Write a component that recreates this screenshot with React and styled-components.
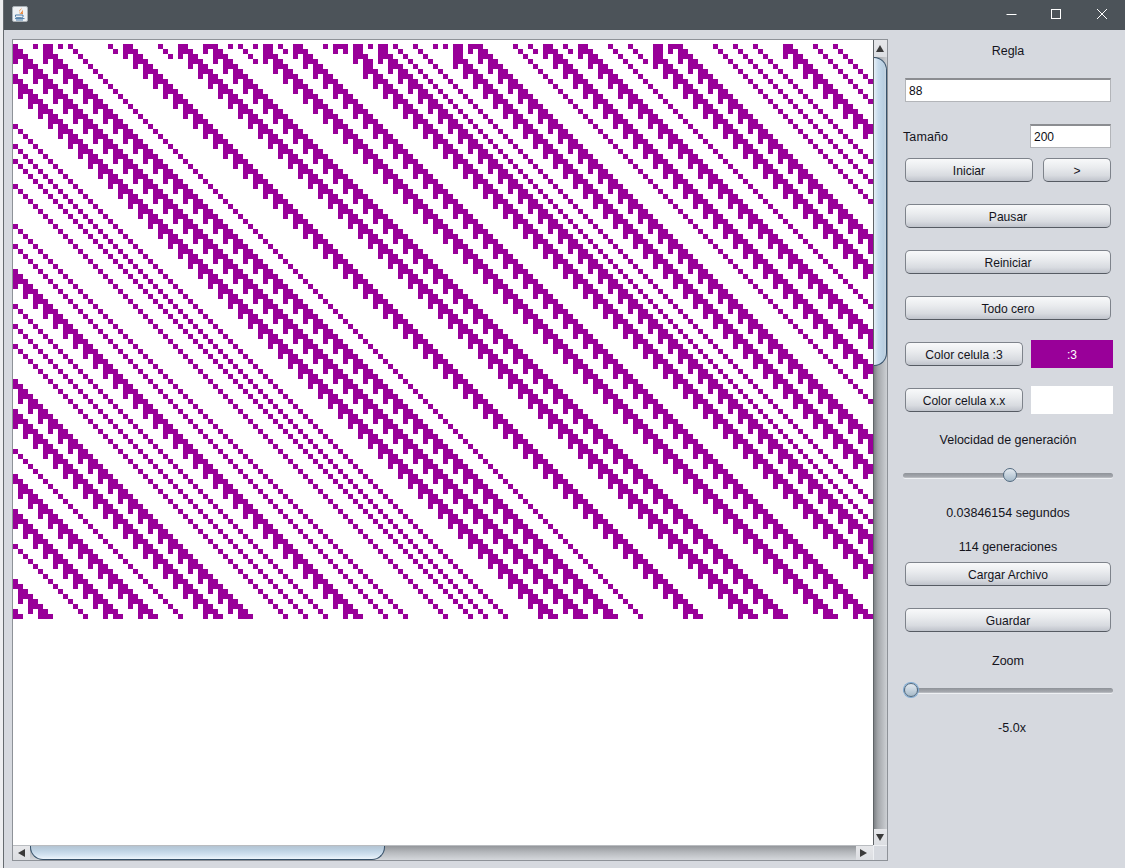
import React from "react";
import styled, { createGlobalStyle } from "styled-components";

const COLS = 172;
const HIDDEN = 130;
const ROWS = 115;
const CELL = 5;
const TOP_ROW = [
  0, 4, 6, 7, 9, 11, 19, 22, 23, 29, 33, 34, 38, 39, 40, 43, 45, 48, 50, 51, 53, 56, 57,
  ...[4, 6, 7, 8, 10, 11, 13, 15, 16, 18, 22, 26, 28, 30, 31, 33, 34, 35, 42, 45, 48, 49, 52, 55, 56].map((c) => c + 58),
  ...[3, 7, 12, 13, 15, 16, 17, 24, 28, 32, 38, 39, 44, 48].map((c) => c + 116),
];
const LEFT_EDGE = new Set([
  0, 1, 2, 3, 6, 7, 16, 20, 23, 28, 36, 40, 45, 46, 47, 48, 52, 56, 60, 67, 68, 73, 74, 75, 76,
  81, 86, 87, 93, 94, 95, 96, 100, 107, 108, 113, 114,
]);
const RULE = 88;

function buildPath() {
  const total = COLS + HIDDEN;
  let row = new Array(total).fill(0);
  TOP_ROW.forEach((c) => {
    row[c] = 1;
    if (c + COLS < total) row[c + COLS] = 1;
  });
  let d = "";
  for (let y = 0; y < ROWS; y++) {
    for (let x = 0; x < COLS; x++) {
      if (!row[x]) continue;
      let end = x;
      while (end + 1 < COLS && row[end + 1]) end++;
      d += `M${x * CELL} ${y * CELL}h${(end - x + 1) * CELL}v${CELL}h-${(end - x + 1) * CELL}z`;
      x = end;
    }
    const next = new Array(total).fill(0);
    for (let x = 1; x < total; x++) {
      const idx = (row[x - 1] << 2) | (row[x] << 1) | (x + 1 < total ? row[x + 1] : 0);
      next[x] = (RULE >> idx) & 1;
    }
    next[0] = LEFT_EDGE.has(y + 1) ? 1 : 0;
    row = next;
  }
  return d;
}
const CELLS_PATH = buildPath();

const Global = createGlobalStyle`
  html, body { margin: 0; padding: 0; background: #d6d9df; overflow: hidden; }
  #root { width: 1125px; height: 868px; }
`;

const Screen = styled.div`
  display: flex;
  width: 1125px;
  height: 868px;
  font-family: "Liberation Sans", Arial, sans-serif;
  font-size: 12px;
  color: #14141c;
`;
const BehindStrip = styled.div`
  width: 3px;
  background: #eeeff1;
  border-right: 1px solid #666b70;
`;
const Window = styled.div`
  flex: 1;
  display: flex;
  flex-direction: column;
  min-width: 0;
`;
const TitleBar = styled.div`
  height: 30px;
  flex: none;
  background: #4c5359;
  display: flex;
  align-items: center;
  justify-content: space-between;
  padding: 0 1px 2px 8px;
  box-sizing: border-box;
`;
const WindowButtons = styled.div`
  display: flex;
`;
const WindowButton = styled.div`
  width: 45px;
  height: 28px;
  display: flex;
  align-items: center;
  justify-content: center;
`;
const Body = styled.div`
  flex: 1;
  display: flex;
  background: #d6d9df;
  min-height: 0;
`;
const ScrollPane = styled.div`
  margin: 9px 0 7px 8px;
  width: 876px;
  box-sizing: border-box;
  border: 1px solid #8e9298;
  display: grid;
  grid-template-columns: 860px 14px;
  grid-template-rows: 805px 15px;
  background: #d6d9df;
`;
const Viewport = styled.div`
  background: #fff;
  overflow: hidden;
  padding-top: 4px;
  box-sizing: border-box;
  svg { display: block; }
`;
const VBar = styled.div`
  display: flex;
  flex-direction: column;
  border-left: 1px solid #5f6367;
`;
const HBar = styled.div`
  display: flex;
  border-top: 1px solid #b9bcc0;
`;
const VTrack = styled.div`
  flex: 1;
  background: linear-gradient(to right, #7f8387, #a3a6aa 30%, #cdd0d4);
`;
const HTrack = styled.div`
  flex: 1;
  background: linear-gradient(to bottom, #94979b, #b6b9bd 45%, #d5d8dc);
`;
const VThumb = styled.div`
  height: ${(p) => p.$size}px;
  box-sizing: border-box;
  border: 1px solid #37526b;
  border-left: none;
  border-radius: 0 13px 13px 0;
  background: linear-gradient(to right, #e6eff7, #c7dbec 35%, #b9cfe1 80%, #c8d5e0);
`;
const HThumb = styled.div`
  width: ${(p) => p.$size}px;
  height: 100%;
  box-sizing: border-box;
  border: 1px solid #37526b;
  border-top: none;
  border-radius: 0 0 13px 13px;
  background: linear-gradient(to bottom, #b4c4d2, #bcd0e1 30%, #d3e3f1 70%, #eef5fb);
`;
const ArrowCell = styled.div`
  flex: none;
  width: ${(p) => p.$w || "auto"};
  height: ${(p) => p.$h || "auto"};
  display: flex;
  align-items: center;
  justify-content: center;
  background: linear-gradient(to bottom, #e6e7ea, #dcdee2);
  svg { display: block; }
`;
const Corner = styled.div`
  background: #d6d9df;
  border-left: 1px solid #eef0f3;
  border-top: 1px solid #eef0f3;
`;
const Panel = styled.div`
  width: 210px;
  margin-left: 15px;
  display: flex;
  flex-direction: column;
`;
const Label = styled.div`
  margin-top: ${(p) => p.$top}px;
  height: 16px;
  line-height: 18px;
  text-align: center;
  white-space: nowrap;
  font-size: 12.5px;
  padding-left: ${(p) => p.$shift || 0}px;
`;
const Field = styled.div`
  height: 24px;
  box-sizing: border-box;
  background: #fff;
  border: 1px solid #b3b5b9;
  border-top: 2px solid #8b8d91;
  padding-left: 3px;
  line-height: 22px;
  color: #0c0c14;
  width: ${(p) => p.$width}px;
`;
const WideField = styled(Field)`
  margin: ${(p) => p.$top}px 0 0 2px;
`;
const Row = styled.div`
  margin-top: ${(p) => p.$top}px;
  display: flex;
  align-items: center;
  padding-left: 2px;
  gap: ${(p) => p.$gap || 0}px;
`;
const SizeLabel = styled.span`
  width: 127px;
  margin-left: -2px;
  font-size: 12.5px;
  padding-top: 1px;
  letter-spacing: 0.1px;
`;
const Button = styled.div`
  width: ${(p) => p.$width || 206}px;
  height: 24px;
  flex: none;
  box-sizing: border-box;
  border: 1px solid #7e838b;
  border-bottom-color: #565b63;
  border-radius: 5px;
  background: linear-gradient(to bottom, #f8f9fa, #e9ebee 40%, #d8dbe0 75%, #bfc3cb);
  display: flex;
  align-items: center;
  justify-content: center;
  font-size: 12.1px;
  padding-top: 1px;
`;
const Swatch = styled.div`
  width: 82px;
  height: 28px;
  flex: none;
  background: ${(p) => p.$color};
  color: #fff;
  display: flex;
  align-items: center;
  justify-content: center;
  padding-top: 1px;
  box-sizing: border-box;
`;
const Slider = styled.div`
  position: relative;
  margin-top: ${(p) => p.$top}px;
  height: 16px;
  display: flex;
  align-items: center;
`;
const SliderTrack = styled.div`
  width: 100%;
  height: 5px;
  border-radius: 3px;
  background: linear-gradient(to bottom, #8f9399, #a3a6ac 70%, #c2c5ca);
  box-shadow: 0 1px 0 #eef0f3;
`;
const SliderThumb = styled.div`
  position: absolute;
  left: ${(p) => p.$at}px;
  top: 1px;
  width: 14px;
  height: 14px;
  margin-left: -7px;
  box-sizing: border-box;
  border-radius: 50%;
  border: 1px solid #51697f;
  background: linear-gradient(to bottom, #e3e9ef, #c5d2dd 50%, #a6bac9);
  box-shadow: ${(p) => (p.$focus ? "0 0 0 1px #7fabd3" : "none")};
`;

const JavaIcon = () => (
  <svg width="16" height="16" viewBox="0 0 16 16">
    <rect x="0.5" y="0.5" width="15" height="15" rx="1.5" fill="#eef1f4" stroke="#a9b0b6" />
    <path d="M9.5 1.5c1 2-3 3-2 5.6.2.6.6.9.9 1-.6-1.8 3.4-2.8 1.8-5.2 1.6 1.6-.2 3.4.8 5.2-2-.4-4.4-1.2-3.6-3.6C7.9 3.4 9.7 3 9.5 1.5z" fill="#e8761f" />
    <path d="M3.5 9h7.5v1.7c0 .6-.6 1-1.3 1H5c-.8 0-1.5-.5-1.5-1.1z M3 12.6h9.5 M4 14h7" fill="none" stroke="#4d7ba6" strokeWidth="1" />
  </svg>
);
const MinIcon = () => (
  <svg width="12" height="12" viewBox="0 0 12 12">
    <path d="M0.5 6.5h10" stroke="#fff" strokeWidth="1" />
  </svg>
);
const MaxIcon = () => (
  <svg width="12" height="12" viewBox="0 0 12 12">
    <rect x="0.5" y="1.5" width="9" height="9" fill="none" stroke="#fff" strokeWidth="1" />
  </svg>
);
const CloseIcon = () => (
  <svg width="12" height="12" viewBox="0 0 12 12">
    <path d="M1 1l10 10M11 1L1 11" stroke="#fff" strokeWidth="1" />
  </svg>
);
const Tri = ({ dir }) => {
  const pts = {
    up: "4,1 8,8 0,8",
    down: "0,1 8,1 4,8",
    left: "8,0 8,8 1,4",
    right: "0,0 0,8 7,4",
  };
  return (
    <svg width="9" height="9" viewBox="0 0 9 9">
      <polygon points={pts[dir]} fill="#3a3a3a" />
    </svg>
  );
};

export default function App() {
  return (
    <Screen>
      <Global />
      <BehindStrip />
      <Window>
        <TitleBar>
          <JavaIcon />
          <WindowButtons>
            <WindowButton><MinIcon /></WindowButton>
            <WindowButton><MaxIcon /></WindowButton>
            <WindowButton><CloseIcon /></WindowButton>
          </WindowButtons>
        </TitleBar>
        <Body>
          <ScrollPane>
            <Viewport>
              <svg width={COLS * CELL} height={ROWS * CELL} shapeRendering="crispEdges">
                <path d={CELLS_PATH} fill="#990099" />
              </svg>
            </Viewport>
            <VBar>
              <ArrowCell $h="17px"><Tri dir="up" /></ArrowCell>
              <VTrack>
                <VThumb $size={309} />
              </VTrack>
              <ArrowCell $h="16px"><Tri dir="down" /></ArrowCell>
            </VBar>
            <HBar>
              <ArrowCell $w="17px"><Tri dir="left" /></ArrowCell>
              <HTrack>
                <HThumb $size={355} />
              </HTrack>
              <ArrowCell $w="17px"><Tri dir="right" /></ArrowCell>
            </HBar>
            <Corner />
          </ScrollPane>
          <Panel>
            <Label $top={12}>Regla</Label>
            <WideField $top={20} $width={206}>88</WideField>
            <Row $top={22}>
              <SizeLabel>Tamaño</SizeLabel>
              <Field $width={81}>200</Field>
            </Row>
            <Row $top={10} $gap={10}>
              <Button $width={128}>Iniciar</Button>
              <Button $width={68}>&gt;</Button>
            </Row>
            <Row $top={22}><Button>Pausar</Button></Row>
            <Row $top={22}><Button>Reiniciar</Button></Row>
            <Row $top={22}><Button>Todo cero</Button></Row>
            <Row $top={20} $gap={8}>
              <Button $width={118}>Color celula :3</Button>
              <Swatch $color="#990099">:3</Swatch>
            </Row>
            <Row $top={18} $gap={8}>
              <Button $width={118}>Color celula x.x</Button>
              <Swatch $color="#ffffff" />
            </Row>
            <Label $top={17}>Velocidad de generación</Label>
            <Slider $top={20}>
              <SliderTrack />
              <SliderThumb $at={107} />
            </Slider>
            <Label $top={21}>0.03846154 segundos</Label>
            <Label $top={18}>114 generaciones</Label>
            <Row $top={8}><Button>Cargar Archivo</Button></Row>
            <Row $top={22}><Button>Guardar</Button></Row>
            <Label $top={20}>Zoom</Label>
            <Slider $top={14}>
              <SliderTrack />
              <SliderThumb $at={8} $focus />
            </Slider>
            <Label $top={21} $shift={8}>-5.0x</Label>
          </Panel>
        </Body>
      </Window>
    </Screen>
  );
}
